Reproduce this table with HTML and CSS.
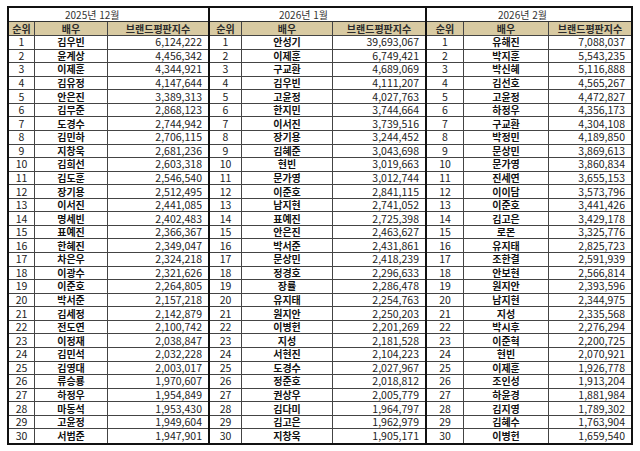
FILE: index.html
```html
<!DOCTYPE html>
<html lang="ko">
<head>
<meta charset="utf-8">
<link rel="stylesheet" href="styles.css">
</head>
<body>
<div class="sheet">
  <div class="tbl tbl-a" id="t1"><div class="title">2025년 12월</div></div>
  <div class="tbl tbl-b" id="t2"><div class="title">2026년 1월</div></div>
  <div class="tbl tbl-c" id="t3"><div class="title">2026년 2월</div></div>
</div>
<script src="script.js"></script>
</body>
</html>
```
FILE: script.js
```js
var data = [
  ["김우빈 6,124,222","윤계상 4,456,342","이제훈 4,344,921","김유정 4,147,644","안은진 3,389,313","김무준 2,868,123","도경수 2,744,942","김민하 2,706,115","지창욱 2,681,236","김희선 2,603,318","김도훈 2,546,540","장기용 2,512,495","이서진 2,441,085","명세빈 2,402,483","표예진 2,366,367","한혜진 2,349,047","차은우 2,324,218","이광수 2,321,626","이준호 2,264,805","박서준 2,157,218","김세정 2,142,879","전도연 2,100,742","이정재 2,038,847","김민석 2,032,228","김영대 2,003,017","류승룡 1,970,607","하정우 1,954,849","마동석 1,953,430","고윤정 1,949,604","서범준 1,947,901"],
  ["안성기 39,693,067","이제훈 6,749,421","구교환 4,689,069","김우빈 4,111,207","고윤정 4,027,763","한지민 3,744,664","이서진 3,739,516","장기용 3,244,452","김혜준 3,043,698","현빈 3,019,663","문가영 3,012,744","이준호 2,841,115","남지현 2,741,052","표예진 2,725,398","안은진 2,463,627","박서준 2,431,861","문상민 2,418,239","정경호 2,296,633","장률 2,286,478","유지태 2,254,763","원지안 2,250,203","이병헌 2,201,269","지성 2,181,528","서현진 2,104,223","도경수 2,027,967","정준호 2,018,812","권상우 2,005,779","김다미 1,964,797","김고은 1,962,979","지창욱 1,905,171"],
  ["유해진 7,088,037","박지훈 5,543,235","박신혜 5,116,888","김선호 4,565,267","고윤정 4,472,827","하정우 4,356,173","구교환 4,304,108","박정민 4,189,850","문상민 3,869,613","문가영 3,860,834","진세연 3,655,153","이이담 3,573,796","이준호 3,441,426","김고은 3,429,178","로몬 3,325,776","유지태 2,825,723","조한결 2,591,939","안보현 2,566,814","원지안 2,393,596","남지현 2,344,975","지성 2,335,568","박시후 2,276,294","이준혁 2,200,725","현빈 2,070,921","이제훈 1,926,778","조인성 1,913,204","하윤경 1,881,984","김지영 1,789,302","김혜수 1,763,904","이병헌 1,659,540"]
];
["t1","t2","t3"].forEach(function (id, t) {
  var el = document.getElementById(id);
  var html = '<div class="hd">순위</div><div class="hd">배우</div><div class="hd hd-last">브랜드평판지수</div>';
  data[t].forEach(function (row, i) {
    var p = row.split(" ");
    var last = i === 29 ? " last" : "";
    html += '<div class="c rank' + last + '">' + (i + 1) + '</div>' +
            '<div class="c name' + last + '">' + p[0] + '</div>' +
            '<div class="c num' + last + '">' + p[1] + '</div>';
  });
  el.insertAdjacentHTML("beforeend", html);
});
```
FILE: styles.css
```css
html, body {
  margin: 0;
  padding: 0;
  background: #ffffff;
}
body {
  font-family: "Noto Sans CJK KR", "Noto Sans", sans-serif;
  color: #1a1a1a;
}
.sheet {
  display: flex;
  padding: 6px 0 0 7px;
}
.tbl {
  display: grid;
  box-sizing: border-box;
  height: 439px;
  border: 2px solid #111;
  grid-template-rows: 14px 14px repeat(30, 1fr);
}
.tbl-a {
  width: 203px;
  grid-template-columns: 26px 73px 100px;
}
.tbl-b {
  width: 217px;
  border-left: 0;
  grid-template-columns: 32px 91px 92px;
}
.tbl-c {
  width: 206px;
  border-left: 0;
  grid-template-columns: 37px 85px 82px;
}
.title {
  grid-column: 1 / 4;
  display: flex;
  align-items: center;
  box-sizing: border-box;
  border-bottom: 1px solid #333;
  font-size: 10px;
  color: #333;
  line-height: 12px;
}
.tbl-a .title { padding-left: 56px; }
.tbl-b .title { padding-left: 69px; }
.tbl-c .title { padding-left: 71px; }
.hd, .c {
  display: flex;
  align-items: center;
  justify-content: center;
  box-sizing: border-box;
  min-height: 0;
  border-right: 1px solid #444;
  border-bottom: 1px solid #444;
  line-height: 12px;
  white-space: nowrap;
}
.hd {
  background: #d8caa2;
  font-size: 10px;
  font-weight: 700;
  color: #2a2a2a;
}
.hd-last, .num {
  border-right: 0;
}
.rank {
  font-size: 10.5px;
  color: #222;
}
.name {
  font-size: 10px;
  font-weight: 700;
  color: #111;
}
.num {
  justify-content: flex-end;
  padding-right: 6px;
  font-size: 10.5px;
  color: #222;
}
.last {
  border-bottom: 0;
}
```
